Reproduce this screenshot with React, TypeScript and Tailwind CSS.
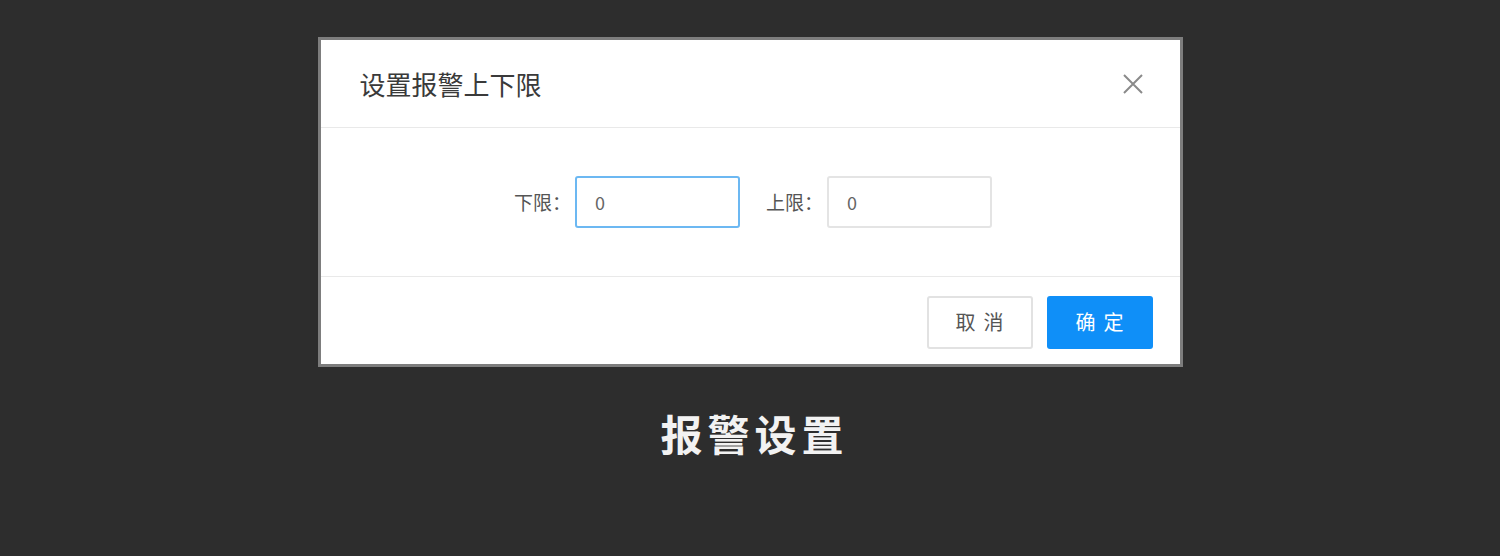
import React from "react";

const font = { fontFamily: '"Noto Sans CJK SC", "Noto Sans", sans-serif' };

function LimitField({ label, value, focused }: { label: string; value: string; focused?: boolean }) {
  return (
    <div className="flex items-center gap-[4px]">
      <span className="text-[19px] text-[#555]">{label}</span>
      <div
        className={
          focused
            ? "flex h-[52px] w-[165px] items-center rounded-[3px] border-2 border-[#6cb8f2] px-[18px] text-[18px] text-[#666]"
            : "flex h-[52px] w-[165px] items-center rounded-[3px] border-2 border-[#e4e4e4] px-[18px] text-[18px] text-[#666]"
        }
      >
        {value}
      </div>
    </div>
  );
}

export default function App() {
  return (
    <div className="flex h-[556px] w-full flex-col items-center bg-[#2d2d2d] pt-[37px]" style={font}>
      {/* dialog */}
      <div className="w-[865px] border-[3px] border-[#7d7d7d] bg-white">
        <div className="flex h-[88px] items-center justify-between border-b border-[#e9e9e9] pl-[39px] pr-[36px]">
          <h2 className="text-[26px] text-[#3a3a3a]">设置报警上下限</h2>
          <svg width="22" height="22" viewBox="0 0 22 22" className="text-[#8a8a8a]">
            <path d="M2 2 L20 20 M20 2 L2 20" stroke="currentColor" strokeWidth="2" />
          </svg>
        </div>
        <div className="flex h-[149px] items-center justify-center gap-[26px] border-b border-[#e9e9e9] pl-[6px]">
          <LimitField label="下限：" value="0" focused />
          <LimitField label="上限：" value="0" />
        </div>
        <div className="flex h-[87px] items-center justify-end gap-[14px] pr-[27px] pt-[3px]">
          <button className="h-[53px] w-[106px] rounded-[3px] border-2 border-[#e2e2e2] bg-white pl-[8px] text-[20px] tracking-[8px] text-[#555]">
            取消
          </button>
          <button className="h-[53px] w-[106px] rounded-[3px] bg-[#0f8ff8] pl-[8px] text-[20px] tracking-[8px] text-white">
            确定
          </button>
        </div>
      </div>
      <div className="mt-[34px] pl-[9px] text-[42px] font-bold tracking-[5px] text-[#f2f2f2]">报警设置</div>
    </div>
  );
}
